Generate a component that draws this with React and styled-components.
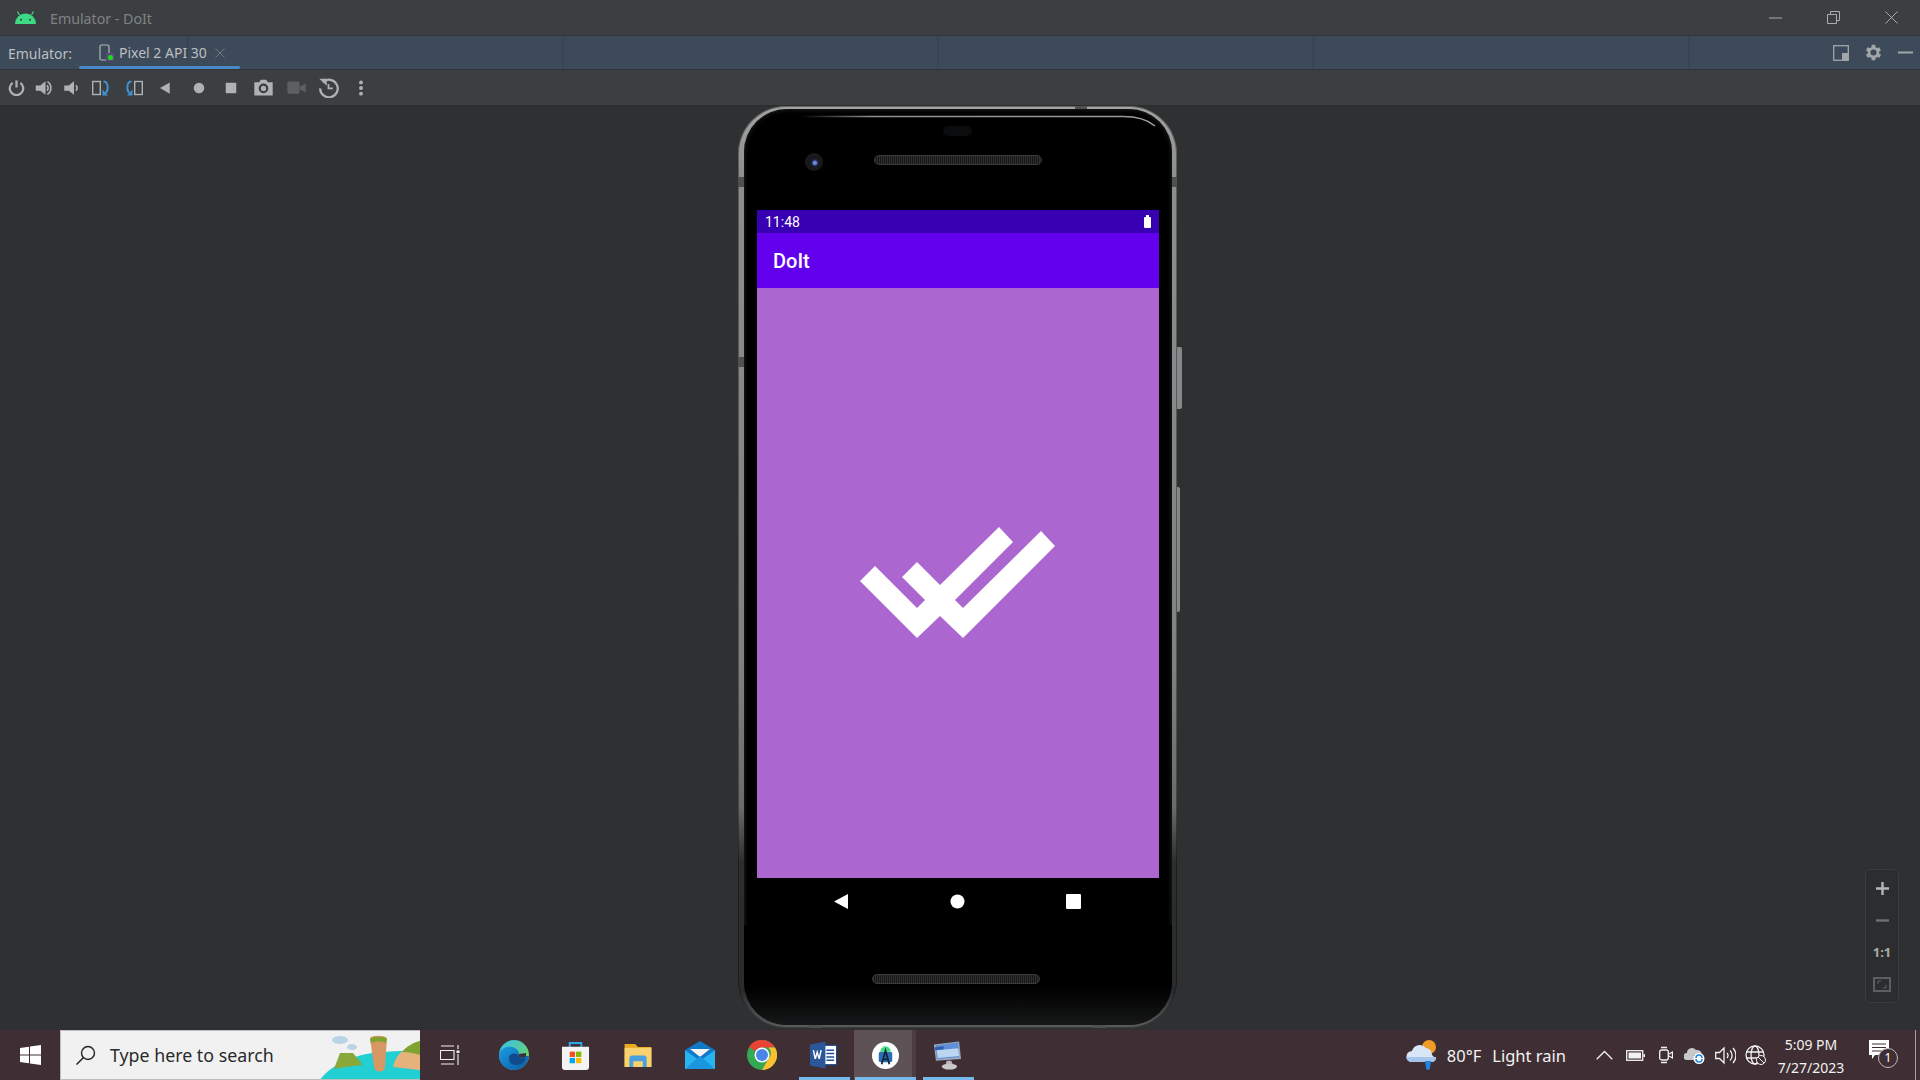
import React from 'react';
import styled, { createGlobalStyle } from 'styled-components';

const GlobalStyle = createGlobalStyle`
  html, body {
    margin: 0;
    padding: 0;
    height: 100%;
    overflow: hidden;
    background: #2e3032;
    font-family: "Noto Sans", "Open Sans", sans-serif;
  }
  #root { height: 100%; }
`;

const Window = styled.div`
  width: 1920px;
  height: 1080px;
  display: flex;
  flex-direction: column;
`;

const TitleBar = styled.div`
  height: 35px;
  flex: none;
  background: #3c3f41;
  border-bottom: 1px solid #323436;
  display: flex;
  align-items: center;
  padding-left: 15px;
`;

const TitleText = styled.span`
  margin-left: 14px;
  font-size: 14.2px;
  color: #7f8284;
  position: relative;
  top: 1px;
`;

const WinControls = styled.div`
  margin-left: auto;
  display: flex;
  height: 100%;
  align-items: center;
`;

const WinButton = styled.div`
  width: 58px;
  height: 100%;
  display: flex;
  align-items: center;
  justify-content: center;
`;

const TabBar = styled.div`
  height: 33px;
  flex: none;
  background-color: #3d4a5a;
  background-image: linear-gradient(to right, #36414f 1px, transparent 1px);
  background-size: 375.3px 100%;
  background-position: 187px 0;
  border-bottom: 1px solid #323436;
  display: flex;
  align-items: stretch;
`;

const TabLabel = styled.span`
  width: 63px;
  font-size: 14px;
  color: #bcbfc2;
  margin-left: 8px;
  line-height: 35px;
  white-space: nowrap;
`;

const Tab = styled.div`
  margin-left: 8px;
  width: 161px;
  box-sizing: border-box;
  padding-left: 20px;
  display: flex;
  align-items: center;
  position: relative;
  &::after {
    content: "";
    position: absolute;
    left: 0;
    right: 0;
    bottom: 0;
    height: 3px;
    border-radius: 2px;
    background: #4a88c7;
  }
`;

const TabText = styled.span`
  margin-left: 5px;
  font-size: 14px;
  color: #bcbfc2;
  white-space: nowrap;
`;

const TabClose = styled.span`
  margin-left: 8px;
  display: flex;
`;

const TabTools = styled.div`
  margin-left: auto;
  display: flex;
  align-items: center;
  gap: 14px;
  padding-right: 7px;
`;

const Toolbar = styled.div`
  height: 35px;
  flex: none;
  background: #3c3f41;
  display: flex;
  align-items: center;
  padding-left: 2.25px;
`;

const ToolButton = styled.div`
  width: ${p => (p.$narrow ? 27.5 : 32.5)}px;
  height: 100%;
  display: flex;
  align-items: center;
  justify-content: center;
`;

const Stage = styled.main`
  flex: 1;
  background: #2e3032;
  border-top: 1px solid #2a2c2e;
  position: relative;
  display: flex;
  justify-content: center;
  min-height: 0;
`;

const Phone = styled.div`
  width: 439px;
  height: 922px;
  box-sizing: border-box;
  margin-left: -5px;
  padding: 3px 5px 3px 6px;
  border-radius: 48px;
  background: linear-gradient(to bottom, #a2a3a3 0, #8c8d8d 8%, #808181 60%, #6a6b6b 76%, #2c2d2e 82%, #2a2b2c 96%, #5a5b5c 100%);
  box-shadow: inset 0 0 0 1px rgba(0, 0, 0, 0.35);
  display: flex;
  position: relative;
`;

const PhoneBody = styled.div`
  flex: 1;
  min-width: 0;
  background: #000;
  border-radius: 43px;
  box-shadow: inset 0 0 5px #2a2a2a;
  display: flex;
  flex-direction: column;
  align-items: center;
`;

const SideKey = styled.div`
  position: absolute;
  left: 100%;
  top: ${p => p.$top}px;
  width: ${p => p.$width}px;
  height: ${p => p.$height}px;
  background: #85878a;
  border-radius: 0 2px 2px 0;
`;

const Seam = styled.div`
  position: absolute;
  ${p => (p.$left !== undefined ? `left: ${p.$left}px;` : '')}
  ${p => (p.$right !== undefined ? `right: ${p.$right}px;` : '')}
  ${p => (p.$top !== undefined ? `top: ${p.$top}px;` : '')}
  ${p => (p.$bottom !== undefined ? `bottom: ${p.$bottom}px;` : '')}
  width: ${p => p.$w}px;
  height: ${p => p.$h}px;
  background: #4f5051;
`;

const Glint = styled.svg`
  position: absolute;
  left: 0;
  top: 0;
`;

const Earpiece = styled.div`
  position: absolute;
  top: 20px;
  left: 50%;
  width: 29px;
  height: 10px;
  margin-left: -14.5px;
  border-radius: 6px;
  background: #0b0c0e;
`;

const TopBezel = styled.div`
  height: 101px;
  width: 100%;
  flex: none;
  display: flex;
  align-items: flex-start;
  padding-top: 44px;
  box-sizing: border-box;
`;

const Camera = styled.div`
  margin-left: 61px;
  width: 18px;
  height: 18px;
  flex: none;
  border-radius: 50%;
  background: radial-gradient(circle at 55% 55%, #6c86d8 0 1.5px, #1c2648 3px, #15161a 5px, #1a1b1d 9px);
`;

const Speaker = styled.div`
  width: 168px;
  height: 10px;
  flex: none;
  margin-left: ${p => p.$left}px;
  margin-top: ${p => p.$top}px;
  box-sizing: border-box;
  border-radius: 5px;
  border: 1px solid #3a3a3a;
  background: repeating-linear-gradient(to right, #2f2f2f 0 1px, #171717 1px 2px);
`;

const Screen = styled.div`
  width: 402px;
  height: 668px;
  flex: none;
  display: flex;
  flex-direction: column;
`;

const StatusBar = styled.div`
  height: 23px;
  flex: none;
  background: #3700b3;
  display: flex;
  align-items: center;
  justify-content: space-between;
  padding: 1px 8px 0;
  box-sizing: border-box;
  font-family: Roboto, sans-serif;
  font-size: 14px;
  color: #fff;
`;

const BatteryGlyph = styled.div`
  width: 7px;
  height: 11px;
  background: #fff;
  border-radius: 1px;
  position: relative;
  &::before {
    content: "";
    position: absolute;
    top: -2px;
    left: 2px;
    width: 3px;
    height: 2px;
    background: #fff;
  }
`;

const AppBar = styled.div`
  height: 55px;
  flex: none;
  background: #6200ee;
  display: flex;
  align-items: center;
  padding-left: 16px;
  font-family: Roboto, sans-serif;
  font-weight: 500;
  font-size: 20px;
  color: #fff;
`;

const Splash = styled.div`
  flex: 1;
  background: #ab66cf;
  display: flex;
  align-items: center;
  justify-content: center;
`;

const NavBar = styled.div`
  width: 402px;
  height: 47px;
  flex: none;
  display: flex;
  align-items: center;
`;

const NavSlot = styled.div`
  width: 116px;
  margin-left: ${p => p.$left}px;
  display: flex;
  justify-content: center;
`;

const BottomBezel = styled.div`
  flex: 1;
  width: 100%;
  display: flex;
  align-items: flex-start;
  border-radius: 0 0 43px 43px;
  background: linear-gradient(to bottom, #000 62%, #161718);
`;

const ZoomPanel = styled.div`
  position: absolute;
  left: 1865px;
  top: 763px;
  width: 34px;
  height: 134px;
  box-sizing: border-box;
  border: 1px solid #3a3c3e;
  border-radius: 5px;
  background: #2b2d2f;
  display: flex;
  flex-direction: column;
  align-items: center;
  padding-top: 2px;
`;

const ZoomItem = styled.div`
  height: 32px;
  flex: none;
  display: flex;
  align-items: center;
  justify-content: center;
  font-size: 13px;
  font-weight: 700;
  color: #a6a8aa;
`;

const Taskbar = styled.footer`
  height: 50px;
  flex: none;
  background: #3f2e33;
  display: flex;
  align-items: stretch;
  position: relative;
`;

const StartButton = styled.div`
  width: 60px;
  display: flex;
  align-items: center;
  justify-content: center;
`;

const SearchBox = styled.div`
  width: 360px;
  box-sizing: border-box;
  background: #f1f1f1;
  border: 1px solid #bdbdbd;
  border-right: none;
  display: flex;
  align-items: center;
  padding-left: 15px;
  overflow: hidden;
`;

const SearchText = styled.span`
  margin-left: 14px;
  font-size: 17.8px;
  color: #2a2a2a;
  white-space: nowrap;
`;

const SearchArt = styled.svg`
  margin-left: auto;
  flex: none;
`;

const TaskView = styled.div`
  width: 63px;
  box-sizing: border-box;
  padding-left: 20px;
  display: flex;
  align-items: center;
`;

const AppSlot = styled.div`
  width: 61.9px;
  position: relative;
  display: flex;
  align-items: center;
  justify-content: center;
  background: ${p => (p.$active ? '#5f5257' : 'transparent')};
  &::before {
    content: "";
    display: ${p => (p.$active ? 'block' : 'none')};
    position: absolute;
    top: 0;
    bottom: 0;
    right: 0;
    width: 4px;
    background: #4b3e43;
  }
  &::after {
    content: "";
    display: ${p => (p.$open ? 'block' : 'none')};
    position: absolute;
    bottom: 0;
    height: 3px;
    left: ${p => (p.$active ? '1px' : '7px')};
    right: ${p => (p.$active ? 0 : '4px')};
    background: #76b9ed;
  }
`;

const Tray = styled.div`
  margin-left: auto;
  display: flex;
  align-items: center;
  color: #f2f2f2;
`;

const Weather = styled.span`
  font-size: 16.5px;
  margin-left: 9px;
  margin-right: ${p => p.$gap || 0}px;
  white-space: nowrap;
`;

const TrayIcon = styled.span`
  display: flex;
  margin-left: ${p => p.$left}px;
`;

const Clock = styled.div`
  margin-left: 5px;
  width: 80px;
  padding-top: 2px;
  text-align: center;
  font-size: 14px;
  line-height: 23px;
  white-space: nowrap;
`;

const Notify = styled.div`
  margin-left: 18px;
  margin-right: 31px;
  margin-top: -11px;
  position: relative;
  display: flex;
`;

const NotifyBadge = styled.span`
  position: absolute;
  left: 9px;
  top: 8px;
  width: 20px;
  height: 20px;
  border-radius: 50%;
  box-sizing: border-box;
  border: 1px solid #bdbdbd;
  background: #3f2e33;
  font-size: 12px;
  line-height: 18px;
  text-align: center;
  color: #fff;
`;

const DesktopEdge = styled.div`
  position: absolute;
  right: 4px;
  top: 0;
  bottom: 0;
  width: 1px;
  background: #a89ea2;
`;

const Ico = ({ size = 18, children, vb }) => (
  <svg width={size} height={size} viewBox={vb || '0 0 24 24'}>{children}</svg>
);

const grey = '#afb1b3';
const blue = '#3f93d4';

const toolIcons = [
  <Ico key="power" size={17}><path d="M12 2v10" stroke={grey} strokeWidth="3.200" /><path d="M6.500 5.500a9.500 9.500 0 1 0 11 0" fill="none" stroke={grey} strokeWidth="3.200" /></Ico>,
  <Ico key="volup" size={18}><path d="M1 8.500h6L14 3v18l-7-5.500H1z" fill={grey} /><path d="M16 8.500a5 5 0 0 1 0 7" fill="none" stroke={grey} strokeWidth="2.400" /><path d="M16.500 3.500a10 10 0 0 1 0 17" fill="none" stroke={grey} strokeWidth="2.200" /></Ico>,
  <Ico key="voldn" size={18}><path d="M3 8.500h6L16 3v18l-7-5.500H3z" fill={grey} /><path d="M18.500 8.500a5 5 0 0 1 0 7" fill="none" stroke={grey} strokeWidth="2.400" /></Ico>,
  <Ico key="rotr" size={18} vb="0 0 18 18"><rect x=".7" y="2.500" width="7.600" height="13" fill="none" stroke={grey} strokeWidth="1.400" /><path d="M11.500 2.500c4.500 0 5.500 7 2.500 11.500" fill="none" stroke={blue} strokeWidth="2" /><path d="M10.500 10.500v6h5.500z" fill={blue} /></Ico>,
  <Ico key="rotl" size={18} vb="0 0 18 18"><rect x="9.700" y="2.500" width="7.600" height="13" fill="none" stroke={grey} strokeWidth="1.400" /><path d="M6.500 2.500C2 2.500 1 9.500 4 14" fill="none" stroke={blue} strokeWidth="2" /><path d="M7.500 10.500v6H2z" fill={blue} /></Ico>,
  <Ico key="back" size={18}><path d="M17 4.500v15L4 12z" fill={grey} /></Ico>,
  <Ico key="home" size={18}><circle cx="12" cy="12" r="7" fill={grey} /></Ico>,
  <Ico key="overview" size={18}><rect x="5" y="5" width="14" height="14" rx="1" fill={grey} /></Ico>,
  <Ico key="camera" size={21}><path d="M1.500 6h5.500l2-3h6l2 3h5.500v15H1.500z" fill={grey} /><circle cx="12" cy="13" r="5.500" fill="#3c3f41" /><circle cx="12" cy="13" r="3" fill={grey} /></Ico>,
  <Ico key="video" size={21}><rect x="1.500" y="5" width="14" height="14" rx="2" fill="#5d5f60" /><path d="M16 11l6.500-4v11L16 14z" fill="#5d5f60" /></Ico>,
  <Ico key="replay" size={21}><path d="M5.500 6a10 10 0 1 1-3 7" fill="none" stroke={grey} strokeWidth="2.600" /><path d="M1.500 2h8.500v8z" fill={grey} /><path d="M12 8v5h5" fill="none" stroke={grey} strokeWidth="2" /></Ico>,
  <Ico key="more" size={18}><circle cx="12" cy="4.500" r="2.600" fill={grey} /><circle cx="12" cy="12" r="2.600" fill={grey} /><circle cx="12" cy="19.500" r="2.600" fill={grey} /></Ico>,
];

const AndroidLogo = () => (
  <svg width="21" height="13" viewBox="0 0 21 13">
    <path d="M0 13a10.500 10.500 0 0 1 21 0z" fill="#3ddc84" />
    <path d="M4.500 4L2.500 0.500M16.500 4l2-3.500" stroke="#3ddc84" strokeWidth="1.200" />
    <circle cx="6" cy="8.800" r="1" fill="#3c3f41" />
    <circle cx="15" cy="8.800" r="1" fill="#3c3f41" />
  </svg>
);

const TabDevice = () => (
  <svg width="15" height="18" viewBox="0 0 15 18">
    <rect x="1" y="1" width="9" height="15" rx="1.500" fill="none" stroke="#b4b6b8" strokeWidth="1.200" />
    <rect x="7" y="9" width="8" height="8" fill="#5a4a7a" />
    <circle cx="11.500" cy="13.500" r="2.500" fill="#19e019" />
  </svg>
);

const DoubleCheck = () => (
  <svg width="196" height="112" viewBox="0 0 196 112">
    <path
      d="M15 39 L57 81 L65 73 L42 50 L57 35 L80 58 L139 0 L153 15 L95 73 L103 81 L181 4 L195 19 L103 111 L80 89 L57 111 L0 54 Z"
      fill="#fff"
    />
  </svg>
);

const WinLogo = () => (
  <svg width="21" height="20" viewBox="0 0 21 20">
    <path d="M0 3l9-1.200V9.500H0zM10 1.600L21 0v9.500H10zM0 10.500h9V18.200L0 17zM10 10.500h11V20L10 18.400z" fill="#fff" />
  </svg>
);

const Edge = () => (
  <svg width="30" height="30" viewBox="0 0 30 30">
    <defs>
      <linearGradient id="edgeA" x1="0" y1="0" x2="1" y2="1"><stop offset="0" stopColor="#35c1f1" /><stop offset="1" stopColor="#7bd64a" /></linearGradient>
      <linearGradient id="edgeB" x1="0" y1="0" x2="1" y2="1"><stop offset="0" stopColor="#1b9de2" /><stop offset="1" stopColor="#0c59a4" /></linearGradient>
    </defs>
    <circle cx="15" cy="15" r="15" fill="url(#edgeA)" />
    <path d="M0 15c1-7 8-9 13-8 6 1 8 6 7 9h10c-1 9-8 14-15 14C7 30 0 24 0 15z" fill="url(#edgeB)" />
    <path d="M10 18c0-5 8-6 10-2 1 3 5 3 7 1-1 6-6 8-10 8-5 0-7-3-7-7z" fill="#114a8b" />
    <path d="M20 16c1 2 5 2 7 0v-3l-7 1z" fill="#3f2e33" />
  </svg>
);

const Store = () => (
  <svg width="29" height="29" viewBox="0 0 30 30">
    <path d="M9 7V2h12v5" fill="none" stroke="#29a8e8" strokeWidth="2" />
    <path d="M1 6h28v21a3 3 0 0 1-3 3H4a3 3 0 0 1-3-3z" fill="#f3f3f3" />
    <rect x="9" y="11" width="5.500" height="5.500" fill="#f25022" />
    <rect x="15.500" y="11" width="5.500" height="5.500" fill="#7fba00" />
    <rect x="9" y="17.500" width="5.500" height="5.500" fill="#00a4ef" />
    <rect x="15.500" y="17.500" width="5.500" height="5.500" fill="#ffb900" />
  </svg>
);

const Folder = () => (
  <svg width="28" height="23" viewBox="0 0 28 24">
    <path d="M0 0h11l3 3h14v21H0z" fill="#e9a920" />
    <path d="M0 4h28v20H0z" fill="#f7d26e" />
    <path d="M5 24v-9a3 3 0 0 1 3-3h12a3 3 0 0 1 3 3v9h-4v-6H9v6z" fill="#4a9fe0" />
  </svg>
);

const Mail = () => (
  <svg width="30" height="28" viewBox="0 0 30 28">
    <path d="M0 9L15 0l15 9v19H0z" fill="#0f78c9" />
    <path d="M5 8h20l-10 8z" fill="#f2f2f2" />
    <path d="M0 9l15 11 15-11v19H0z" fill="#27b4ef" />
    <path d="M0 28L15 15l15 13z" fill="#1a96e0" />
  </svg>
);

const Chrome = () => (
  <svg width="30" height="30" viewBox="0 0 30 30">
    <circle cx="15" cy="15" r="15" fill="#34a853" />
    <path d="M15 0a15 15 0 0 1 13 7.500H15a7.500 7.500 0 0 0-6.500 3.750L2 7A15 15 0 0 1 15 0z" fill="#ea4335" />
    <path d="M28 7.500A15 15 0 0 1 15 30l6.500-11.250a7.500 7.500 0 0 0 0-11.250z" fill="#fbc02d" />
    <circle cx="15" cy="15" r="7.500" fill="#fff" />
    <circle cx="15" cy="15" r="6" fill="#4a86e8" />
  </svg>
);

const Word = () => (
  <svg width="27" height="28" viewBox="0 0 28 28">
    <rect x="11" y="4" width="16.500" height="20" fill="#fff" stroke="#1f4e98" strokeWidth="1.200" />
    <path d="M17 9h8M17 12.500h8M17 16h8M17 19.500h8" stroke="#1f4e98" strokeWidth="1.600" />
    <path d="M0 3l16-3v28L0 25z" fill="#2b579a" />
    <path d="M3.500 9l2 9 2-7 2 7 2-9" fill="none" stroke="#fff" strokeWidth="1.500" />
  </svg>
);

const Studio = () => (
  <svg width="27" height="27" viewBox="0 0 28 28">
    <circle cx="14" cy="14" r="14" fill="#fff" />
    <rect x="7" y="10" width="14" height="11" rx="2" fill="#2d6fb4" />
    <path d="M8.500 10a5.500 5.500 0 0 1 11 0z" fill="#3ddc84" />
    <path d="M10 23l4-14 4 14M12 18h4" fill="none" stroke="#10243a" strokeWidth="1.800" />
  </svg>
);

const Monitor = () => (
  <svg width="29" height="29" viewBox="0 0 30 29">
    <path d="M1 3l26-3 2 18-26 2z" fill="#9aa8bd" />
    <path d="M3 4l23-3 1 15-23 2z" fill="#5f8fd6" />
    <path d="M4 9l22-2 1 8-22 2z" fill="#bcd6f2" />
    <path d="M2 6l9-1v3l-9 1z" fill="#2d5fb0" />
    <path d="M14 20h5l2 5h-8z" fill="#b8b8b8" />
    <ellipse cx="17" cy="26" rx="8" ry="3" fill="#c9c9c9" />
  </svg>
);

const CloudIcon = () => (
  <svg width="32" height="32" viewBox="0 0 32 32">
    <circle cx="23" cy="8" r="7" fill="#f09b27" />
    <path d="M6 23a5.500 5.500 0 0 1 0-11 8 8 0 0 1 14-3 6.500 6.500 0 0 1 6 7 4 4 0 0 1 0 7z" fill="#d8e6f7" />
    <path d="M0 18h30a4 4 0 0 1-4 5H6a6 6 0 0 1-6-5z" fill="#a7c5ea" />
    <path d="M19 22h6l-1 7a2 2 0 0 1-4 0z" fill="#1f86e0" />
  </svg>
);

const trayStroke = { fill: 'none', stroke: '#f2f2f2', strokeWidth: 1.300 };

export default function App() {
  return (
    <Window>
      <GlobalStyle />
      <TitleBar>
        <AndroidLogo />
        <TitleText>Emulator - DoIt</TitleText>
        <WinControls>
          <WinButton><svg width="13" height="2"><path d="M0 1h13" stroke="#a9abad" /></svg></WinButton>
          <WinButton><svg width="13" height="13"><path d="M3.500 3V.5h9v9H10M.5 3.500h9v9h-9z" fill="none" stroke="#a9abad" /></svg></WinButton>
          <WinButton><svg width="13" height="13"><path d="M.5.5l12 12M12.500.5l-12 12" stroke="#a9abad" /></svg></WinButton>
        </WinControls>
      </TitleBar>
      <TabBar>
        <TabLabel>Emulator:</TabLabel>
        <Tab>
          <TabDevice />
          <TabText>Pixel 2 API 30</TabText>
          <TabClose><svg width="10" height="10"><path d="M.5.5l9 9M9.500.5l-9 9" stroke="#6f7780" /></svg></TabClose>
        </Tab>
        <TabTools>
          <svg width="16" height="16" viewBox="0 0 16 16"><rect x=".7" y=".7" width="14.600" height="14.600" fill="none" stroke="#a3a6a9" strokeWidth="1.300" /><path d="M9 8h6v7H9z" fill="#a3a6a9" /></svg>
          <svg width="21" height="21" viewBox="1 0 24 24"><path fill="#a3a6a9" d="M19.400 13a7.500 7.500 0 0 0 0-2l2.100-1.600-2-3.500-2.500 1a7.500 7.500 0 0 0-1.700-1L15 3.200h-4l-.4 2.700a7.500 7.500 0 0 0-1.700 1l-2.500-1-2 3.500L6.500 11a7.500 7.500 0 0 0 0 2l-2.100 1.600 2 3.500 2.500-1a7.500 7.500 0 0 0 1.700 1l.4 2.700h4l.4-2.700a7.500 7.500 0 0 0 1.700-1l2.500 1 2-3.500zM13 15.500a3.500 3.500 0 1 1 0-7 3.500 3.500 0 0 1 0 7z" /></svg>
          <svg width="15" height="3"><path d="M0 1.500h15" stroke="#a3a6a9" strokeWidth="2" /></svg>
        </TabTools>
      </TabBar>
      <Toolbar>
        {toolIcons.map((icon, i) => <ToolButton key={icon.key} $narrow={i < 3}>{icon}</ToolButton>)}
      </Toolbar>
      <Stage>
        <Phone>
          <SideKey $top={241} $height={62} $width={5} />
          <SideKey $top={381} $height={125} $width={3} />
          <Seam $left={0} $top={71} $w={6} $h={10} />
          <Seam $left={0} $top={251} $w={6} $h={10} />
          <Seam $right={0} $top={71} $w={5} $h={10} />
          <Seam $left={337} $top={0} $w={12} $h={3} />
          <Seam $left={71} $bottom={0} $w={13} $h={3} />
          <Seam $left={355} $bottom={0} $w={13} $h={3} />
          <PhoneBody>
            <TopBezel>
              <Camera />
              <Speaker $left={51} $top={2} />
            </TopBezel>
            <Screen>
              <StatusBar>
                <span>11:48</span>
                <BatteryGlyph />
              </StatusBar>
              <AppBar>DoIt</AppBar>
              <Splash><DoubleCheck /></Splash>
            </Screen>
            <NavBar>
              <NavSlot $left={26}><svg width="15" height="15"><path d="M14 0v15L0 7.500z" fill="#fff" /></svg></NavSlot>
              <NavSlot $left={0}><svg width="15" height="15"><circle cx="7.500" cy="7.500" r="7" fill="#fff" /></svg></NavSlot>
              <NavSlot $left={0}><svg width="15" height="15"><rect width="15" height="15" rx="1" fill="#fff" /></svg></NavSlot>
            </NavBar>
            <BottomBezel>
              <Speaker $left={128} $top={49} />
            </BottomBezel>
          </PhoneBody>
          <Earpiece />
          <Glint width="439" height="40">
            <defs>
              <linearGradient id="glintLine"><stop offset="0" stopColor="#000" /><stop offset="0.2" stopColor="#8f9191" /><stop offset="1" stopColor="#9a9c9c" /></linearGradient>
            </defs>
            <path d="M62 10.500H385Q406 10.500 417 20" fill="none" stroke="url(#glintLine)" strokeWidth="1.600" />
          </Glint>
        </Phone>
        <ZoomPanel>
          <ZoomItem><svg width="13" height="13"><path d="M6.500 0v13M0 6.500h13" stroke="#b4b6b8" strokeWidth="2.400" /></svg></ZoomItem>
          <ZoomItem><svg width="13" height="3"><path d="M0 1.500h13" stroke="#6d6f71" strokeWidth="2.400" /></svg></ZoomItem>
          <ZoomItem>1:1</ZoomItem>
          <ZoomItem><svg width="18" height="15"><rect x="1" y="1" width="16" height="13" fill="none" stroke="#5c5e60" strokeWidth="2" /><path d="M5 7V4h3M13 8v3h-3" fill="none" stroke="#5c5e60" /></svg></ZoomItem>
        </ZoomPanel>
      </Stage>
      <Taskbar>
        <StartButton><WinLogo /></StartButton>
        <SearchBox>
          <svg width="20" height="20" viewBox="0 0 20 20"><circle cx="12" cy="8" r="6.500" fill="none" stroke="#222" strokeWidth="1.400" /><path d="M7.500 12.500L.5 19.500" stroke="#222" strokeWidth="1.500" /></svg>
          <SearchText>Type here to search</SearchText>
          <SearchArt width="100" height="50" viewBox="0 0 100 50">
            <path d="M0 50C10 35 35 24 60 22L100 20v30z" fill="#22cfd2" />
            <path d="M14 39l6-16 13 0 10 12c-10 1-20 2-29 4z" fill="#8aa83a" />
            <ellipse cx="20" cy="10" rx="8" ry="4" fill="#b9d3e4" />
            <ellipse cx="32" cy="17" rx="5" ry="3" fill="#b9d3e4" />
            <path d="M50 8c2-3 14-3 17 0l-2 29c0 6-10 6-11 0z" fill="#d89866" />
            <path d="M50 9c4-3 13-3 17 0l-1 4c-6-2-10-2-15 0z" fill="#7fa32f" />
            <path d="M73 37c2-10 8-18 27-26v29z" fill="#e6b27c" />
            <path d="M82 22c4-5 10-9 18-11v14c-6-2-12-3-18-3z" fill="#7fa32f" />
          </SearchArt>
        </SearchBox>
        <TaskView>
          <svg width="20" height="20" viewBox="0 0 20 20"><path d="M1 1h13M1 19h13M.5 5.500h13.500v9H.5zM18 0v4M18 9v11" fill="none" stroke="#f2f2f2" strokeWidth="1.100" /><rect x="16.500" y="5.500" width="3" height="2.500" fill="#f2f2f2" /></svg>
        </TaskView>
        <AppSlot><Edge /></AppSlot>
        <AppSlot><Store /></AppSlot>
        <AppSlot><Folder /></AppSlot>
        <AppSlot><Mail /></AppSlot>
        <AppSlot><Chrome /></AppSlot>
        <AppSlot $open><Word /></AppSlot>
        <AppSlot $open $active><Studio /></AppSlot>
        <AppSlot $open><Monitor /></AppSlot>
        <Tray>
          <CloudIcon />
          <Weather $gap={2}>80°F</Weather>
          <Weather>Light rain</Weather>
          <TrayIcon $left={30}><svg width="17" height="10"><path d="M.7 9.300L8.500 1.500l7.800 7.800" {...trayStroke} /></svg></TrayIcon>
          <TrayIcon $left={13}><svg width="19" height="11"><rect x=".7" y=".7" width="16" height="9.600" {...trayStroke} /><rect x="2.500" y="2.500" width="12.500" height="6" fill="#f2f2f2" /><rect x="17.500" y="4" width="1.500" height="3" fill="#f2f2f2" /></svg></TrayIcon>
          <TrayIcon $left={14}><svg width="14" height="18"><rect x=".7" y="4" width="8.600" height="10" rx="2" {...trayStroke} /><path d="M10 8l3.500-2v6L10 10M2 1.500h6M2 16.500h6" {...trayStroke} /></svg></TrayIcon>
          <TrayIcon $left={11}><svg width="21" height="18"><path d="M3 14a3.500 3.500 0 0 1 0-7 5 5 0 0 1 9-3 5 5 0 0 1 6 5H10v5z" fill="#c8c8c8" /><circle cx="15" cy="12.500" r="5.500" fill="#fff" /><path d="M12 12a3 3 0 0 1 6 0M18 13a3 3 0 0 1-6 0" fill="none" stroke="#1f86e0" strokeWidth="1.500" /></svg></TrayIcon>
          <TrayIcon $left={10}><svg width="21" height="19"><path d="M.7 6.500h3.800L9 2v15l-4.500-4.500H.7zM12 7a3.500 3.500 0 0 1 0 5M15 4.500a7 7 0 0 1 0 10M18 2a11 11 0 0 1 0 15" {...trayStroke} /></svg></TrayIcon>
          <TrayIcon $left={9}><svg width="21" height="20"><circle cx="10" cy="10" r="9" {...trayStroke} /><ellipse cx="10" cy="10" rx="4" ry="9" {...trayStroke} /><path d="M1 7h18M1 13h18" {...trayStroke} /><circle cx="16" cy="15" r="4.500" fill="#3f2e33" stroke="#f2f2f2" /><path d="M13 12l6 6" stroke="#f2f2f2" /></svg></TrayIcon>
          <Clock>5:09 PM<br />7/27/2023</Clock>
          <Notify>
            <svg width="20" height="19"><path d="M0 0h20v15H6l-3 4v-4H0z" fill="#fff" /><path d="M3 4h14M3 7.500h14M3 11h10" stroke="#3f2e33" /></svg>
            <NotifyBadge>1</NotifyBadge>
          </Notify>
        </Tray>
        <DesktopEdge />
      </Taskbar>
    </Window>
  );
}
